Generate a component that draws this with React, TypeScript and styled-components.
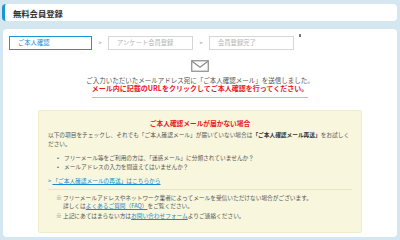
import React from 'react'
import styled, { createGlobalStyle } from 'styled-components'

const GlobalStyle = createGlobalStyle`
    html, body {
        margin: 0;
        padding: 0;
        background: #d4e6ef;
    }
    body {
        font-family: 'Noto Sans CJK JP', 'Noto Sans', sans-serif;
        color: #555;
    }
`

const Page = styled.div`
    width: 400px;
    height: 240px;
    box-sizing: border-box;
    padding: 4px 3px 3px 2px;
    display: flex;
    flex-direction: column;
    gap: 8px;
    overflow: hidden;
`

const HeaderBar = styled.div`
    height: 17px;
    background: #fff;
    border-radius: 4px;
    border-left: 3px solid #1a96d4;
    display: flex;
    align-items: center;
    padding-left: 8px;
`

const HeaderTitle = styled.h1`
    margin: 0;
    font-size: 8.3px;
    line-height: 10px;
    font-weight: 700;
    color: #333;
`

const Card = styled.div`
    flex: 1;
    margin-left: 1px;
    background: #fff;
    border-radius: 4px;
    padding: 7px 6px 4px;
    display: flex;
    flex-direction: column;
    align-items: center;
`

const StepRow = styled.div`
    align-self: flex-start;
    display: flex;
    align-items: center;
`

const StepBox = styled.div<{ active?: boolean }>`
    box-sizing: border-box;
    width: ${(p) => (p.active ? 83 : 85)}px;
    height: 14px;
    border: 1px solid ${(p) => (p.active ? '#1a96d4' : '#d6d6d6')};
    color: ${(p) => (p.active ? '#1a8ad0' : '#b4b4b4')};
    font-size: 6.3px;
    line-height: 12px;
    padding-left: 8px;
    white-space: nowrap;
`

const StepArrow = styled.span`
    width: 16px;
    text-align: center;
    font-size: 5.5px;
    color: #999;
`

const StepMark = styled.span`
    align-self: flex-start;
    margin: -2px 0 0 5px;
    width: 2px;
    height: 3px;
    background: #777;
`

const Envelope = styled.svg`
    margin-top: 10px;
    display: block;
`

const SentText = styled.p`
    margin: 4px 0 0;
    font-size: 6.5px;
    line-height: 8px;
    color: #555;
    white-space: nowrap;
`

const NoticeText = styled.p`
    margin: 0;
    padding-bottom: 5px;
    border-bottom: 1px solid #f3a7a7;
    font-size: 7px;
    line-height: 8px;
    font-weight: 700;
    color: #e8161f;
    white-space: nowrap;
`

const HelpBox = styled.div`
    box-sizing: border-box;
    width: 324px;
    margin-top: 12px;
    flex: 1;
    background: #f8f6dc;
    border: 1px solid #efecce;
    border-radius: 2px;
    padding: 8px 9px 0 9px;
    font-size: 5.7px;
    color: #555;
`

const HelpTitle = styled.h2`
    margin: 0;
    text-align: center;
    font-size: 6.7px;
    line-height: 9px;
    font-weight: 700;
    color: #e8161f;
`

const Paragraph = styled.p`
    margin: 2px 0 0;
    line-height: 9px;
    padding-right: 2px;
`

const Strong = styled.strong`
    color: #333;
`

const BulletList = styled.ul`
    margin: 5px 0 0;
    padding: 0 0 0 16px;
    line-height: 9px;
    list-style: none;
`

const Bullet = styled.li`
    position: relative;
    &::before {
        content: '•';
        position: absolute;
        left: -7px;
        color: #555;
    }
`

const ResendLink = styled.a`
    display: block;
    margin-top: 5px;
    line-height: 9px;
    color: #1a8ad0;
    text-decoration: none;
    span {
        text-decoration: underline;
    }
`

const Divider = styled.hr`
    margin: 4px 0 0;
    border: 0;
    border-top: 1px solid #e9e5c4;
`

const NoteList = styled.div`
    margin-top: 4px;
    display: flex;
    flex-direction: column;
    gap: 2px;
    padding-left: 8px;
`

const Note = styled.div`
    display: flex;
    line-height: 8px;
`

const NoteMark = styled.span`
    width: 7px;
    flex-shrink: 0;
    color: #777;
`

const TextLink = styled.a`
    color: #1a8ad0;
    text-decoration: underline;
`

const App = () => {
    return (
        <>
            <GlobalStyle />
            <Page>
                <HeaderBar>
                    <HeaderTitle>無料会員登録</HeaderTitle>
                </HeaderBar>
                <Card>
                    <StepRow>
                        <StepBox active>ご本人確認</StepBox>
                        <StepArrow>&gt;</StepArrow>
                        <StepBox>アンケート会員登録</StepBox>
                        <StepArrow>&gt;</StepArrow>
                        <StepBox>会員登録完了</StepBox>
                        <StepMark />
                    </StepRow>
                    <Envelope width="18" height="12" viewBox="0 0 18 12">
                        <rect x="0.75" y="0.75" width="16.5" height="10.5" fill="none" stroke="#8a8a8a" strokeWidth="1.2" />
                        <path d="M1 1.2 L9 7.2 L17 1.2" fill="none" stroke="#8a8a8a" strokeWidth="1.2" />
                    </Envelope>
                    <SentText>ご入力いただいたメールアドレス宛に「ご本人確認メール」を送信しました。</SentText>
                    <NoticeText>メール内に記載のURLをクリックしてご本人確認を行ってください。</NoticeText>
                    <HelpBox>
                        <HelpTitle>ご本人確認メールが届かない場合</HelpTitle>
                        <Paragraph>
                            以下の項目をチェックし、それでも「ご本人確認メール」が届いていない場合は<Strong>「ご本人確認メール再送」</Strong>をお試しください。
                        </Paragraph>
                        <BulletList>
                            <Bullet>フリーメール等をご利用の方は、「迷惑メール」に分類されていませんか？</Bullet>
                            <Bullet>メールアドレスの入力を間違えてはいませんか？</Bullet>
                        </BulletList>
                        <ResendLink href="#">
                            &gt; <span>「ご本人確認メールの再送」はこちらから</span>
                        </ResendLink>
                        <Divider />
                        <NoteList>
                            <Note>
                                <NoteMark>※</NoteMark>
                                <div>
                                    フリーメールアドレスやネットワーク業者によってメールを受信いただけない場合がございます。
                                    <br />
                                    詳しくは<TextLink href="#">よくあるご質問（FAQ）</TextLink>をご覧ください。
                                </div>
                            </Note>
                            <Note>
                                <NoteMark>※</NoteMark>
                                <div>
                                    上記にあてはまらない方は<TextLink href="#">お問い合わせフォーム</TextLink>よりご連絡ください。
                                </div>
                            </Note>
                        </NoteList>
                    </HelpBox>
                </Card>
            </Page>
        </>
    )
}

export default App
